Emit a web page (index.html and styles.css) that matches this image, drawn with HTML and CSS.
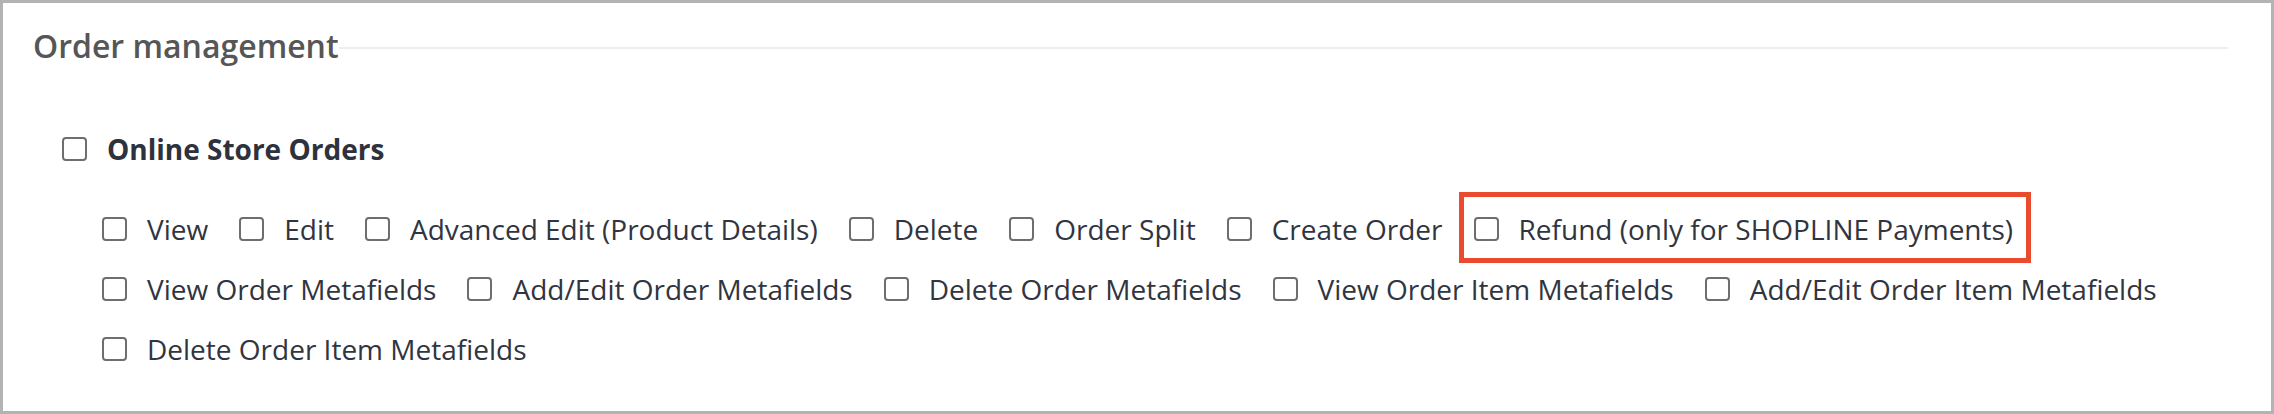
FILE: index.html
```html
<!DOCTYPE html>
<html lang="en">
<head>
<meta charset="utf-8">
<title>Order management</title>
<link rel="stylesheet" href="styles.css">
</head>
<body>
<section class="panel">
  <header class="panel-head">
    <h2 class="panel-title">Order management</h2>
    <span class="panel-rule"></span>
  </header>

  <div class="group">
    <label class="check check-group">
      <input type="checkbox">
      <span class="box"></span>
      <span class="text">Online Store Orders</span>
    </label>

    <div class="perm-list">
      <label class="check"><input type="checkbox"><span class="box"></span><span class="text">View</span></label>
      <label class="check"><input type="checkbox"><span class="box"></span><span class="text">Edit</span></label>
      <label class="check"><input type="checkbox"><span class="box"></span><span class="text">Advanced Edit (Product Details)</span></label>
      <label class="check"><input type="checkbox"><span class="box"></span><span class="text">Delete</span></label>
      <label class="check"><input type="checkbox"><span class="box"></span><span class="text">Order Split</span></label>
      <label class="check"><input type="checkbox"><span class="box"></span><span class="text">Create Order</span></label>
      <label class="check is-highlighted"><input type="checkbox"><span class="box"></span><span class="text">Refund (only for SHOPLINE Payments)</span></label>
      <label class="check"><input type="checkbox"><span class="box"></span><span class="text">View Order Metafields</span></label>
      <label class="check"><input type="checkbox"><span class="box"></span><span class="text">Add/Edit Order Metafields</span></label>
      <label class="check"><input type="checkbox"><span class="box"></span><span class="text">Delete Order Metafields</span></label>
      <label class="check"><input type="checkbox"><span class="box"></span><span class="text">View Order Item Metafields</span></label>
      <label class="check"><input type="checkbox"><span class="box"></span><span class="text">Add/Edit Order Item Metafields</span></label>
      <label class="check"><input type="checkbox"><span class="box"></span><span class="text">Delete Order Item Metafields</span></label>
    </div>
  </div>
</section>
</body>
</html>
```

FILE: styles.css
```css
html, body {
  margin: 0;
  padding: 0;
  background: #ffffff;
}

body {
  font-family: "Open Sans", "Noto Sans", "Liberation Sans", sans-serif;
  color: #30353f;
}

.panel {
  box-sizing: border-box;
  width: 2274px;
  height: 414px;
  border: 3px solid #b3b3b3;
  background: #ffffff;
  padding: 23px 43px 0 30px;
}

/* Section heading with a rule running to the right edge */
.panel-head {
  display: flex;
  align-items: center;
  height: 40px;
}

.panel-title {
  margin: 0;
  font-size: 32px;
  line-height: 40px;
  font-weight: 600;
  color: #565656;
  white-space: nowrap;
}

.panel-rule {
  flex: 1;
  height: 2px;
  margin-top: 4px;
  background: #eeeeee;
}

.group {
  margin: 63px 0 0 29px;
}

/* Checkbox rows */
.check {
  position: relative;
  display: inline-flex;
  align-items: center;
  gap: 20px;
  height: 40px;
  font-size: 28px;
  line-height: 40px;
  white-space: nowrap;
  cursor: pointer;
}

.check input {
  position: absolute;
  opacity: 0;
  width: 0;
  height: 0;
  margin: 0;
}

.check .box {
  box-sizing: border-box;
  flex: none;
  width: 25px;
  height: 24px;
  border: 2px solid #6e6e6e;
  border-radius: 4px;
  background: #ffffff;
}

.check-group .text {
  font-weight: 700;
  color: #2d323c;
}

.perm-list {
  display: flex;
  flex-wrap: wrap;
  column-gap: 31px;
  row-gap: 20px;
  margin: 40px 0 0 40px;
}

/* Red callout frame around an item */
.is-highlighted::after {
  content: "";
  position: absolute;
  top: -17px;
  bottom: -14px;
  left: -15px;
  right: -18px;
  border: 5px solid #ea4a2e;
  pointer-events: none;
}
```
